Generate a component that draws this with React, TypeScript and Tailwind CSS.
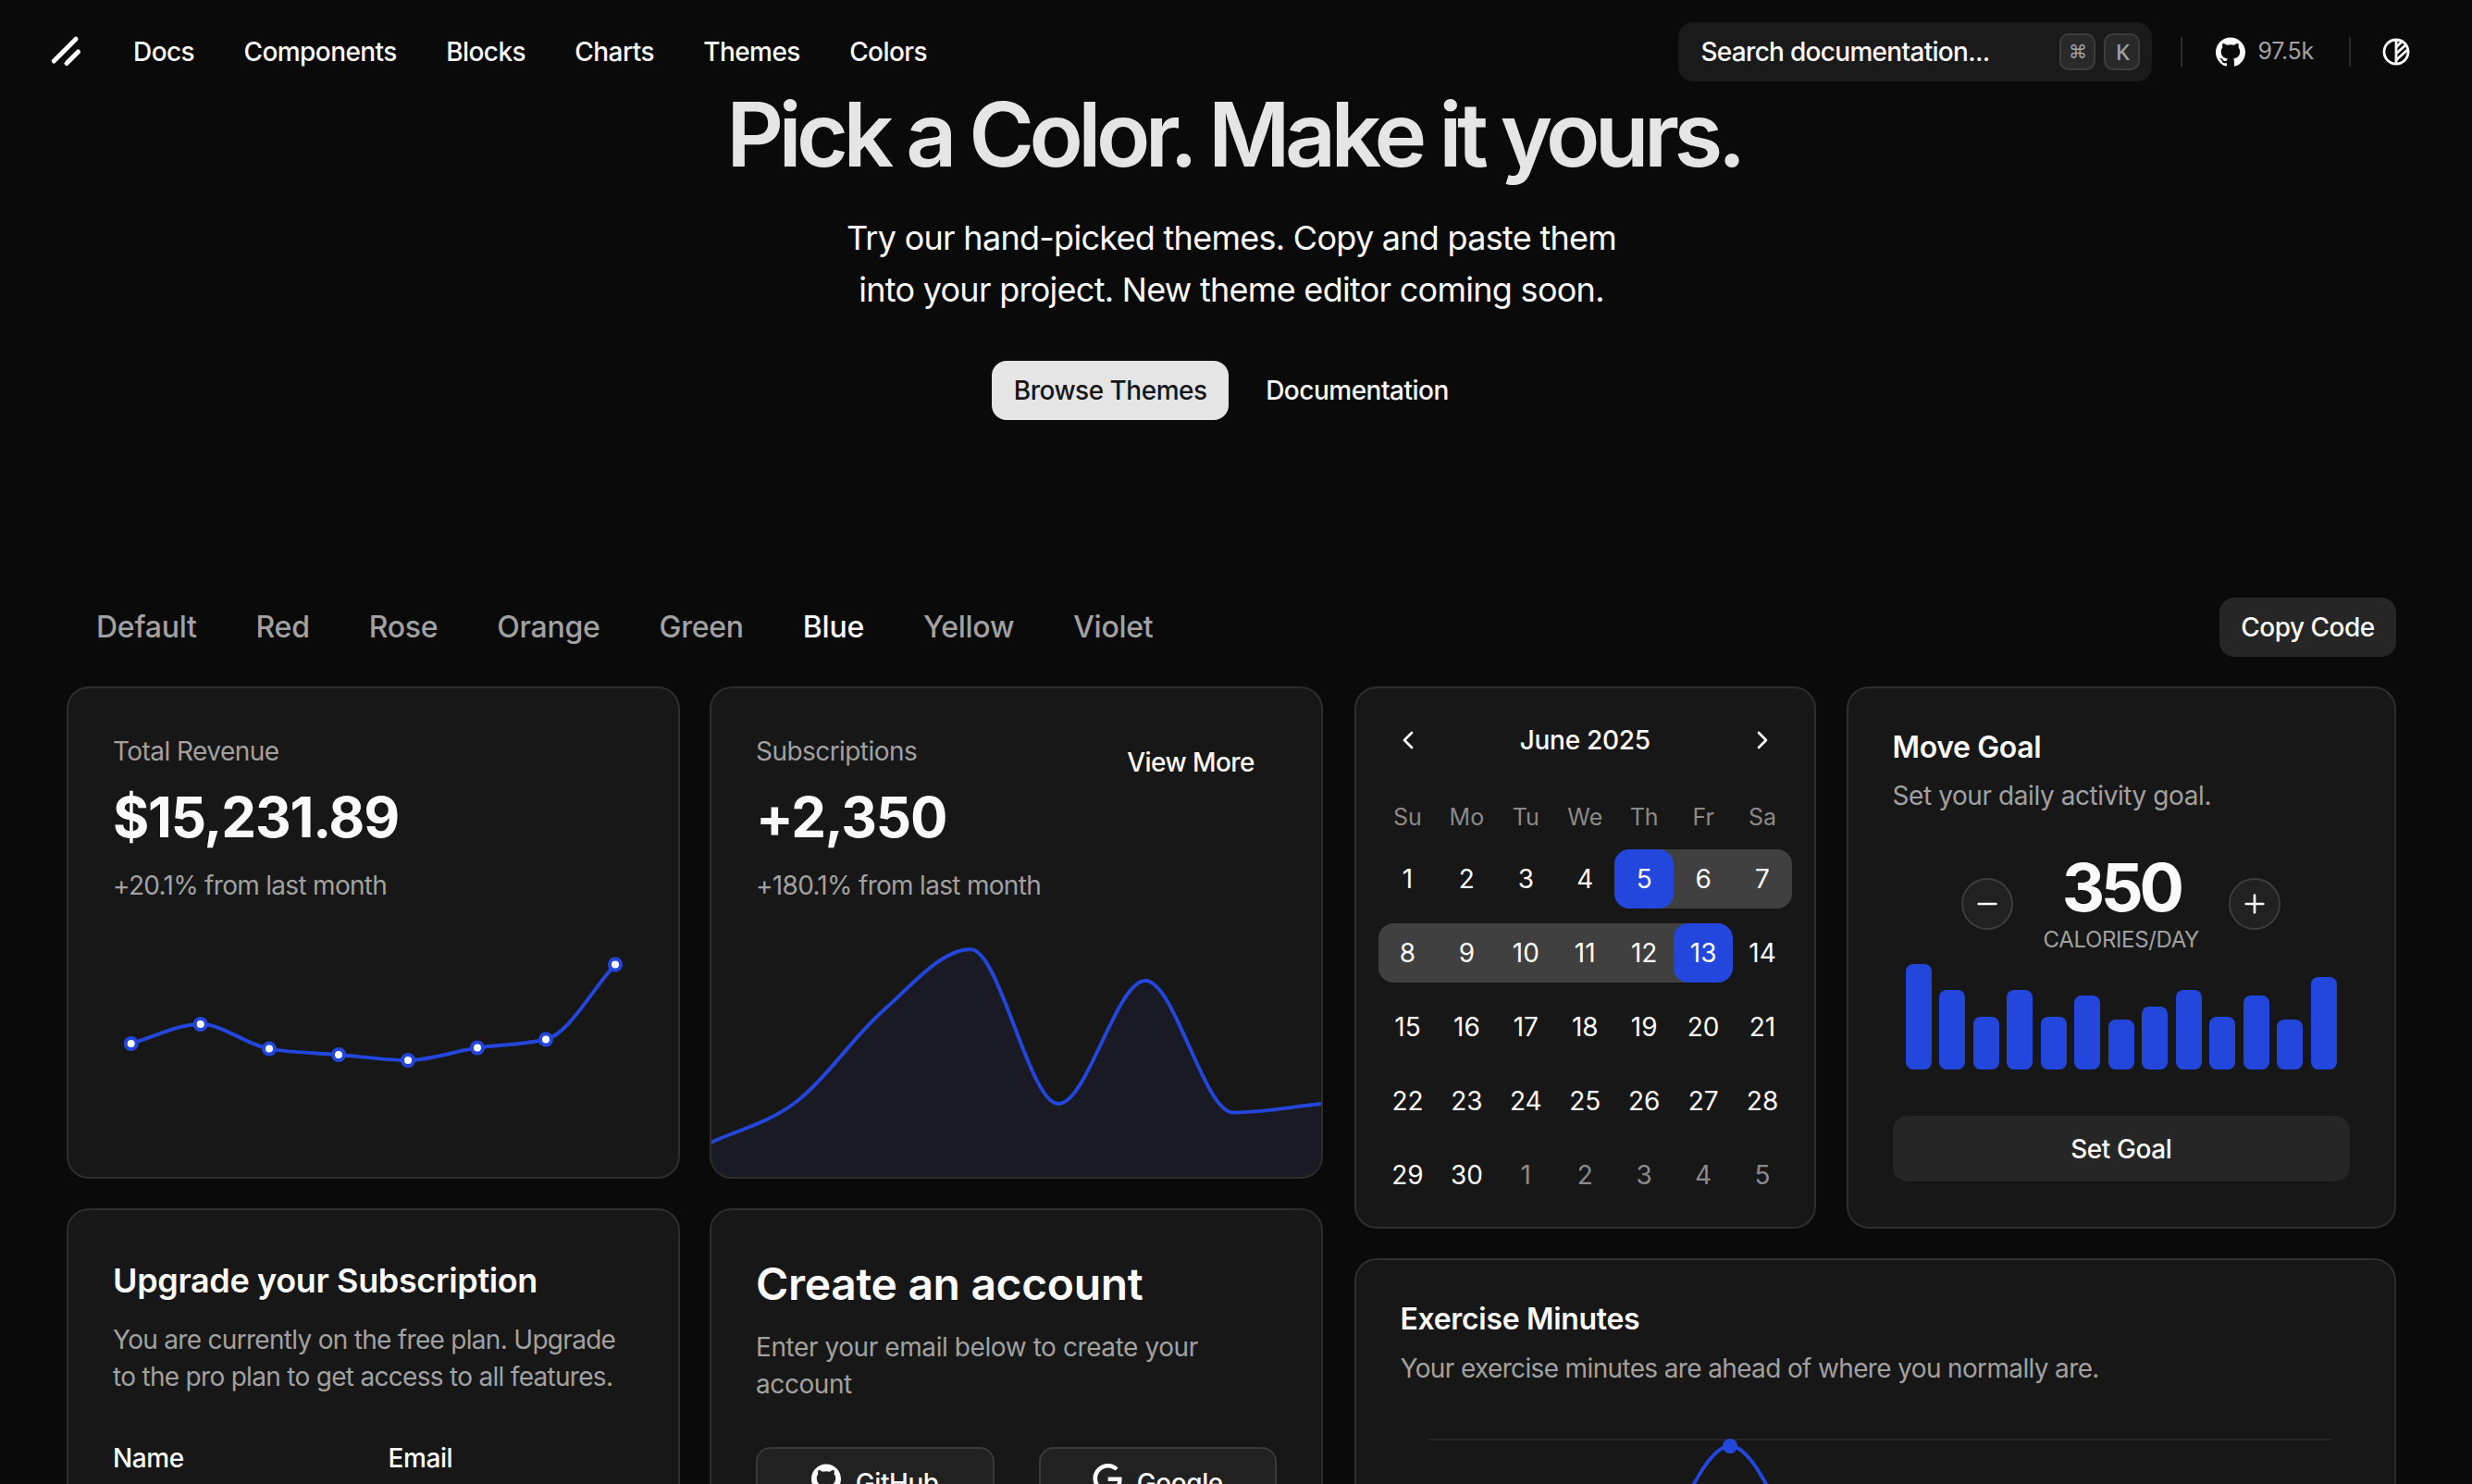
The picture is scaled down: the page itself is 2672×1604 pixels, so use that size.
import { ChevronLeft, ChevronRight, Minus, Plus } from 'lucide-react';
import { SiGithub, SiGoogle } from 'react-icons/si';

const NAV = ['Docs', 'Components', 'Blocks', 'Charts', 'Themes', 'Colors'];
const TABS = ['Default', 'Red', 'Rose', 'Orange', 'Green', 'Blue', 'Yellow', 'Violet'];
const WEEKDAYS = ['Su', 'Mo', 'Tu', 'We', 'Th', 'Fr', 'Sa'];
const BARS = [114, 86, 57, 86, 57, 80, 54, 68, 86, 57, 80, 54, 100];

const REVENUE: [number, number][] = [
  [67.7, 126], [142.7, 105], [217, 131.6], [292, 138], [367, 144], [442, 130.5], [516, 121.5], [591, 40.5],
];
const SUBS: [number, number][] = [
  [-3, 234], [91.5, 189], [186, 90], [280, 24], [375, 191], [469, 58], [564, 200.5], [660, 191],
];

// same curve the chart library calls monotoneX
function monotonePath(pts: [number, number][]) {
  const n = pts.length;
  const slopes: number[] = [];
  for (let i = 0; i < n - 1; i++) {
    slopes.push((pts[i + 1][1] - pts[i][1]) / (pts[i + 1][0] - pts[i][0]));
  }
  const tangents = pts.map((_, i) => {
    if (i === 0) return slopes[0];
    if (i === n - 1) return slopes[n - 2];
    if (slopes[i - 1] * slopes[i] <= 0) return 0;
    const h0 = pts[i][0] - pts[i - 1][0];
    const h1 = pts[i + 1][0] - pts[i][0];
    const p = (slopes[i - 1] * h1 + slopes[i] * h0) / (h0 + h1);
    return (
      (Math.sign(slopes[i - 1]) + Math.sign(slopes[i])) *
      Math.min(Math.abs(slopes[i - 1]), Math.abs(slopes[i]), 0.5 * Math.abs(p))
    );
  });
  let d = `M ${pts[0][0]} ${pts[0][1]}`;
  for (let i = 0; i < n - 1; i++) {
    const dx = (pts[i + 1][0] - pts[i][0]) / 3;
    d += ` C ${pts[i][0] + dx} ${pts[i][1] + tangents[i] * dx}, ${pts[i + 1][0] - dx} ${pts[i + 1][1] - tangents[i + 1] * dx}, ${pts[i + 1][0]} ${pts[i + 1][1]}`;
  }
  return d;
}

function Logo() {
  return (
    <svg viewBox="0 0 256 256" className="w-[40px] h-[40px]" fill="none" stroke="#fafafa" strokeWidth="32" strokeLinecap="round">
      <line x1="208" y1="128" x2="128" y2="208" />
      <line x1="192" y1="40" x2="40" y2="192" />
    </svg>
  );
}

function ThemeIcon() {
  return (
    <svg viewBox="0 0 32 32" className="w-[32px] h-[32px]" fill="none" stroke="#fafafa" strokeWidth="2.8">
      <circle cx="16" cy="16" r="13" />
      <line x1="16" y1="3" x2="16" y2="29" />
      <line x1="16" y1="11" x2="21.5" y2="5.5" />
      <line x1="16" y1="18" x2="26.5" y2="8.5" />
      <line x1="16" y1="25" x2="28" y2="14" />
    </svg>
  );
}

function Header() {
  return (
    <header className="h-[97px] pt-[24px] pl-[52px] pr-[66px] flex items-start">
      <div className="h-[64px] flex items-center">
        <Logo />
        <nav className="flex items-center ml-[52px] gap-[53.3px] text-[28px] font-medium tracking-[-0.02em] text-[#fafafa]">
          {NAV.map((n) => (
            <a key={n}>{n}</a>
          ))}
        </nav>
      </div>
      <div className="ml-auto h-[64px] flex items-center">
        <div className="w-[512px] h-[64px] rounded-[16px] bg-[#1a1a1a] pl-[24px] pr-[13px] flex items-center justify-between text-[28px] font-medium tracking-[-0.025em] text-[#fafafa]">
          <span>Search documentation...</span>
          <span className="flex gap-[9px]">
            <kbd className="w-[39px] h-[40px] rounded-[10px] border-2 border-[#3d3d3d] bg-[#292929] flex items-center justify-center text-[20px] text-[#a1a1a1] font-sans">⌘</kbd>
            <kbd className="w-[39px] h-[40px] rounded-[10px] border-2 border-[#3d3d3d] bg-[#292929] flex items-center justify-center text-[24px] text-[#a1a1a1] font-sans">K</kbd>
          </span>
        </div>
        <div className="w-[2px] h-[32px] bg-[#2a2a2a] ml-[31px]" />
        <SiGithub className="w-[32px] h-[32px] ml-[36px] text-[#fafafa]" />
        <span className="ml-[13px] text-[25px] tracking-[-0.01em] text-[#a1a1a1]">97.5k</span>
        <div className="w-[2px] h-[32px] bg-[#2a2a2a] ml-[38px]" />
        <span className="ml-[33px]">
          <ThemeIcon />
        </span>
      </div>
    </header>
  );
}

function Hero() {
  return (
    <section className="flex flex-col items-center">
      <h1 className="pl-[5px] text-[96px] leading-[96px] font-semibold tracking-[-0.058em] text-[#e5e5e5]">
        Pick a Color. Make it yours.
      </h1>
      <p className="mt-[36px] text-center text-[36px] leading-[56px] tracking-[-0.02em] text-[#fafafa]">
        Try our hand-picked themes. Copy and paste them
        <br />
        into your project. New theme editor coming soon.
      </p>
      <div className="mt-[49px] flex items-center gap-[16px] text-[28px] font-medium tracking-[-0.018em]">
        <button className="h-[64px] w-[256px] rounded-[16px] bg-[#e5e5e5] text-[#171717]">Browse Themes</button>
        <button className="h-[64px] px-[24px] rounded-[16px] text-[#fafafa]">Documentation</button>
      </div>
    </section>
  );
}

function Tabs() {
  return (
    <div className="mt-[192px] mb-[32px] h-[64px] flex items-center justify-between">
      <div className="flex text-[32px] font-medium tracking-[-0.008em]">
        {TABS.map((t) => (
          <a key={t} className={t === 'Blue' ? 'px-[32px] text-[#fafafa]' : 'px-[32px] text-[#a1a1a1]'}>
            {t}
          </a>
        ))}
      </div>
      <button className="h-[64px] w-[191px] rounded-[16px] bg-[#262626] text-[28px] font-medium tracking-[-0.018em] text-[#fafafa]">
        Copy Code
      </button>
    </div>
  );
}

function Card({ className, children }: { className?: string; children: React.ReactNode }) {
  return (
    <div className={`rounded-[24px] border-2 border-[#2e2e2e] bg-[#171717] overflow-hidden ${className ?? ''}`}>
      {children}
    </div>
  );
}

function RevenueCard() {
  return (
    <Card className="h-[532px]">
      <div className="px-[48px] pt-[48px]">
        <div className="text-[28px] leading-[40px] tracking-[-0.02em] text-[#a1a1a1]">Total Revenue</div>
        <div className="mt-[21px] text-[60px] leading-[60px] font-bold tracking-[-0.02em] text-[#fafafa]">$15,231.89</div>
        <div className="mt-[24px] text-[28px] leading-[40px] tracking-[-0.025em] text-[#a1a1a1]">+20.1% from last month</div>
      </div>
      <svg viewBox="0 0 659 270" className="mt-[25px] block w-[659px] h-[270px]" fill="none">
        <path d={monotonePath(REVENUE)} stroke="#2347dd" strokeWidth="4" />
        {REVENUE.map(([x, y]) => (
          <circle key={x} cx={x} cy={y} r="6" fill="#fff" stroke="#2347dd" strokeWidth="4" />
        ))}
      </svg>
    </Card>
  );
}

function SubscriptionsCard() {
  const line = monotonePath(SUBS);
  return (
    <Card className="h-[532px]">
      <div className="pl-[48px] pr-[48px] pt-[48px] flex justify-between items-start">
        <div>
          <div className="text-[28px] leading-[40px] tracking-[-0.02em] text-[#a1a1a1]">Subscriptions</div>
          <div className="mt-[21px] text-[60px] leading-[60px] font-bold tracking-[-0.02em] text-[#fafafa]">+2,350</div>
          <div className="mt-[24px] text-[28px] leading-[40px] tracking-[-0.025em] text-[#a1a1a1]">+180.1% from last month</div>
        </div>
        <button className="h-[64px] px-[24px] text-[28px] font-medium tracking-[-0.02em] text-[#fafafa]">View More</button>
      </div>
      <svg viewBox="0 0 659 270" className="mt-[25px] block w-[659px] h-[270px]" fill="none">
        <path d={`${line} L 660 270 L -3 270 Z`} fill="#1a1a24" />
        <path d={line} stroke="#2347dd" strokeWidth="4" />
      </svg>
    </Card>
  );
}

function UpgradeCard() {
  return (
    <Card className="h-[420px]">
      <div className="p-[48px]">
        <h3 className="text-[36px] leading-[56px] font-semibold tracking-[-0.01em] text-[#fafafa]">Upgrade your Subscription</h3>
        <p className="mt-[16px] text-[28px] leading-[40px] tracking-[-0.025em] text-[#a1a1a1]">
          You are currently on the free plan. Upgrade to the pro plan to get access to all features.
        </p>
        <div className="mt-[48px] grid grid-cols-2 gap-[32px] text-[28px] leading-[40px] font-medium tracking-[-0.015em] text-[#fafafa]">
          <label>Name</label>
          <label>Email</label>
        </div>
      </div>
    </Card>
  );
}

function AccountCard() {
  return (
    <Card className="h-[420px]">
      <div className="p-[48px]">
        <h3 className="text-[48px] leading-[64px] font-semibold tracking-[-0.007em] text-[#fafafa]">Create an account</h3>
        <p className="mt-[16px] text-[28px] leading-[40px] tracking-[-0.015em] text-[#a1a1a1]">
          Enter your email below to create your account
        </p>
        <div className="mt-[48px] grid grid-cols-2 gap-[48px]">
          <button className="h-[72px] rounded-[16px] border-2 border-[#3a3a3a] bg-[#212121] flex items-start pt-[16px] justify-center gap-[16px] text-[28px] font-medium tracking-[-0.015em] text-[#fafafa]">
            <SiGithub className="w-[32px] h-[32px]" />
            GitHub
          </button>
          <button className="h-[72px] rounded-[16px] border-2 border-[#3a3a3a] bg-[#212121] flex items-start pt-[16px] justify-center gap-[16px] text-[28px] font-medium tracking-[-0.015em] text-[#fafafa]">
            <SiGoogle className="w-[32px] h-[32px]" />
            Google
          </button>
        </div>
      </div>
    </Card>
  );
}

function DayCell({ day, outside }: { day: number; outside: boolean }) {
  const base = 'h-[64px] flex items-center justify-center text-[28px] ';
  if (outside) return <div className={base + 'text-[#8a8a8a]'}>{day}</div>;
  // range ends sit on half of the grey strip so the blue corners show grey behind them
  if (day === 5) {
    return (
      <div className="h-[64px] bg-[linear-gradient(to_right,transparent_50%,#404040_50%)]">
        <div className={base + 'rounded-[16px] bg-[#2347dd] text-[#fafafa]'}>{day}</div>
      </div>
    );
  }
  if (day === 13) {
    return (
      <div className="h-[64px] bg-[linear-gradient(to_left,transparent_50%,#404040_50%)]">
        <div className={base + 'rounded-[16px] bg-[#2347dd] text-[#fafafa]'}>{day}</div>
      </div>
    );
  }
  if (day === 7) return <div className={base + 'rounded-r-[16px] bg-[#404040] text-[#fafafa]'}>{day}</div>;
  if (day === 8) return <div className={base + 'rounded-l-[16px] bg-[#404040] text-[#fafafa]'}>{day}</div>;
  if (day > 5 && day < 13) return <div className={base + 'bg-[#404040] text-[#fafafa]'}>{day}</div>;
  return <div className={base + 'text-[#fafafa]'}>{day}</div>;
}

function CalendarCard() {
  const days = Array.from({ length: 35 }, (_, i) => ({
    day: i < 30 ? i + 1 : i - 29,
    outside: i >= 30,
  }));
  return (
    <Card className="w-[499.5px] h-[586px] shrink-0">
      <div className="p-[24px]">
        <div className="h-[64px] flex items-center justify-between px-[16px] text-[#fafafa]">
          <ChevronLeft className="w-[32px] h-[32px]" strokeWidth={2} />
          <span className="text-[28px] font-medium tracking-[-0.01em]">June 2025</span>
          <ChevronRight className="w-[32px] h-[32px]" strokeWidth={2} />
        </div>
        <div className="mt-[32px] grid grid-cols-7">
          {WEEKDAYS.map((d) => (
            <div key={d} className="h-[40px] flex items-center justify-center text-[25px] text-[#8a8a8a]">
              {d}
            </div>
          ))}
        </div>
        <div className="mt-[14px] grid grid-cols-7 gap-y-[16px]">
          {days.map((d, i) => (
            <DayCell key={i} day={d.day} outside={d.outside} />
          ))}
        </div>
      </div>
    </Card>
  );
}

function MoveGoalCard() {
  return (
    <Card className="flex-1 h-[586px]">
      <div className="p-[48px]">
        <h3 className="text-[32px] leading-[32px] font-semibold tracking-[-0.012em] text-[#fafafa]">Move Goal</h3>
        <p className="mt-[16px] text-[28px] leading-[40px] tracking-[-0.015em] text-[#a1a1a1]">Set your daily activity goal.</p>
        <div className="mt-[43px] flex items-center justify-center">
          <button className="w-[56px] h-[56px] mb-[2px] rounded-full border-2 border-[#3d3d3d] bg-[#212121] flex items-center justify-center text-[#fafafa]">
            <Minus className="w-[32px] h-[32px]" strokeWidth={2} />
          </button>
          <div className="w-[233px] text-center">
            <div className="text-[72px] leading-[72px] font-bold tracking-[-0.06em] text-[#fafafa]">350</div>
            <div className="mt-[5px] text-[24px] leading-[32px] tracking-[-0.015em] text-[#a1a1a1]">CALORIES/DAY</div>
          </div>
          <button className="w-[56px] h-[56px] mb-[2px] rounded-full border-2 border-[#3d3d3d] bg-[#212121] flex items-center justify-center text-[#fafafa]">
            <Plus className="w-[32px] h-[32px]" strokeWidth={2} />
          </button>
        </div>
        <div className="mt-[10px] h-[114px] flex items-end justify-center gap-[8.5px]">
          {BARS.map((h, i) => (
            <div key={i} className="w-[28px] rounded-[8px] bg-[#2347dd]" style={{ height: h }} />
          ))}
        </div>
        <button className="mt-[50px] w-full h-[71px] rounded-[16px] bg-[#262626] text-[28px] font-medium tracking-[-0.015em] text-[#fafafa]">
          Set Goal
        </button>
      </div>
    </Card>
  );
}

function ExerciseCard() {
  return (
    <Card className="h-[420px]">
      <div className="px-[48px] pt-[48px]">
        <h3 className="text-[32px] leading-[32px] font-semibold tracking-[-0.01em] text-[#fafafa]">Exercise Minutes</h3>
        <p className="mt-[17px] text-[28px] leading-[40px] tracking-[-0.023em] text-[#a1a1a1]">
          Your exercise minutes are ahead of where you normally are.
        </p>
        <svg viewBox="0 0 1026 200" className="mt-[31px] block w-[1026px] h-[200px]" fill="none">
          <line x1="30" y1="26" x2="1006" y2="26" stroke="#262626" strokeWidth="2" />
          <path d="M 282 140 C 318 70, 336 33, 356 33 C 376 33, 394 70, 430 140" stroke="#2347dd" strokeWidth="4" />
          <circle cx="356" cy="33" r="8" fill="#2347dd" />
        </svg>
      </div>
    </Card>
  );
}

export default function App() {
  return (
    <div className="h-[1604px] overflow-hidden bg-[#0a0a0a] font-['Inter',sans-serif]">
      <Header />
      <main className="pl-[72px] pr-[82px]">
        <Hero />
        <div className="w-[2518px]">
          <Tabs />
          <div className="flex gap-[33.5px] items-start">
            <div className="w-[1358px] shrink-0 grid grid-cols-2 gap-[32px]">
              <RevenueCard />
              <SubscriptionsCard />
              <UpgradeCard />
              <AccountCard />
            </div>
            <div className="flex-1 flex flex-col gap-[32px]">
              <div className="flex gap-[32.5px]">
                <CalendarCard />
                <MoveGoalCard />
              </div>
              <ExerciseCard />
            </div>
          </div>
        </div>
      </main>
    </div>
  );
}
